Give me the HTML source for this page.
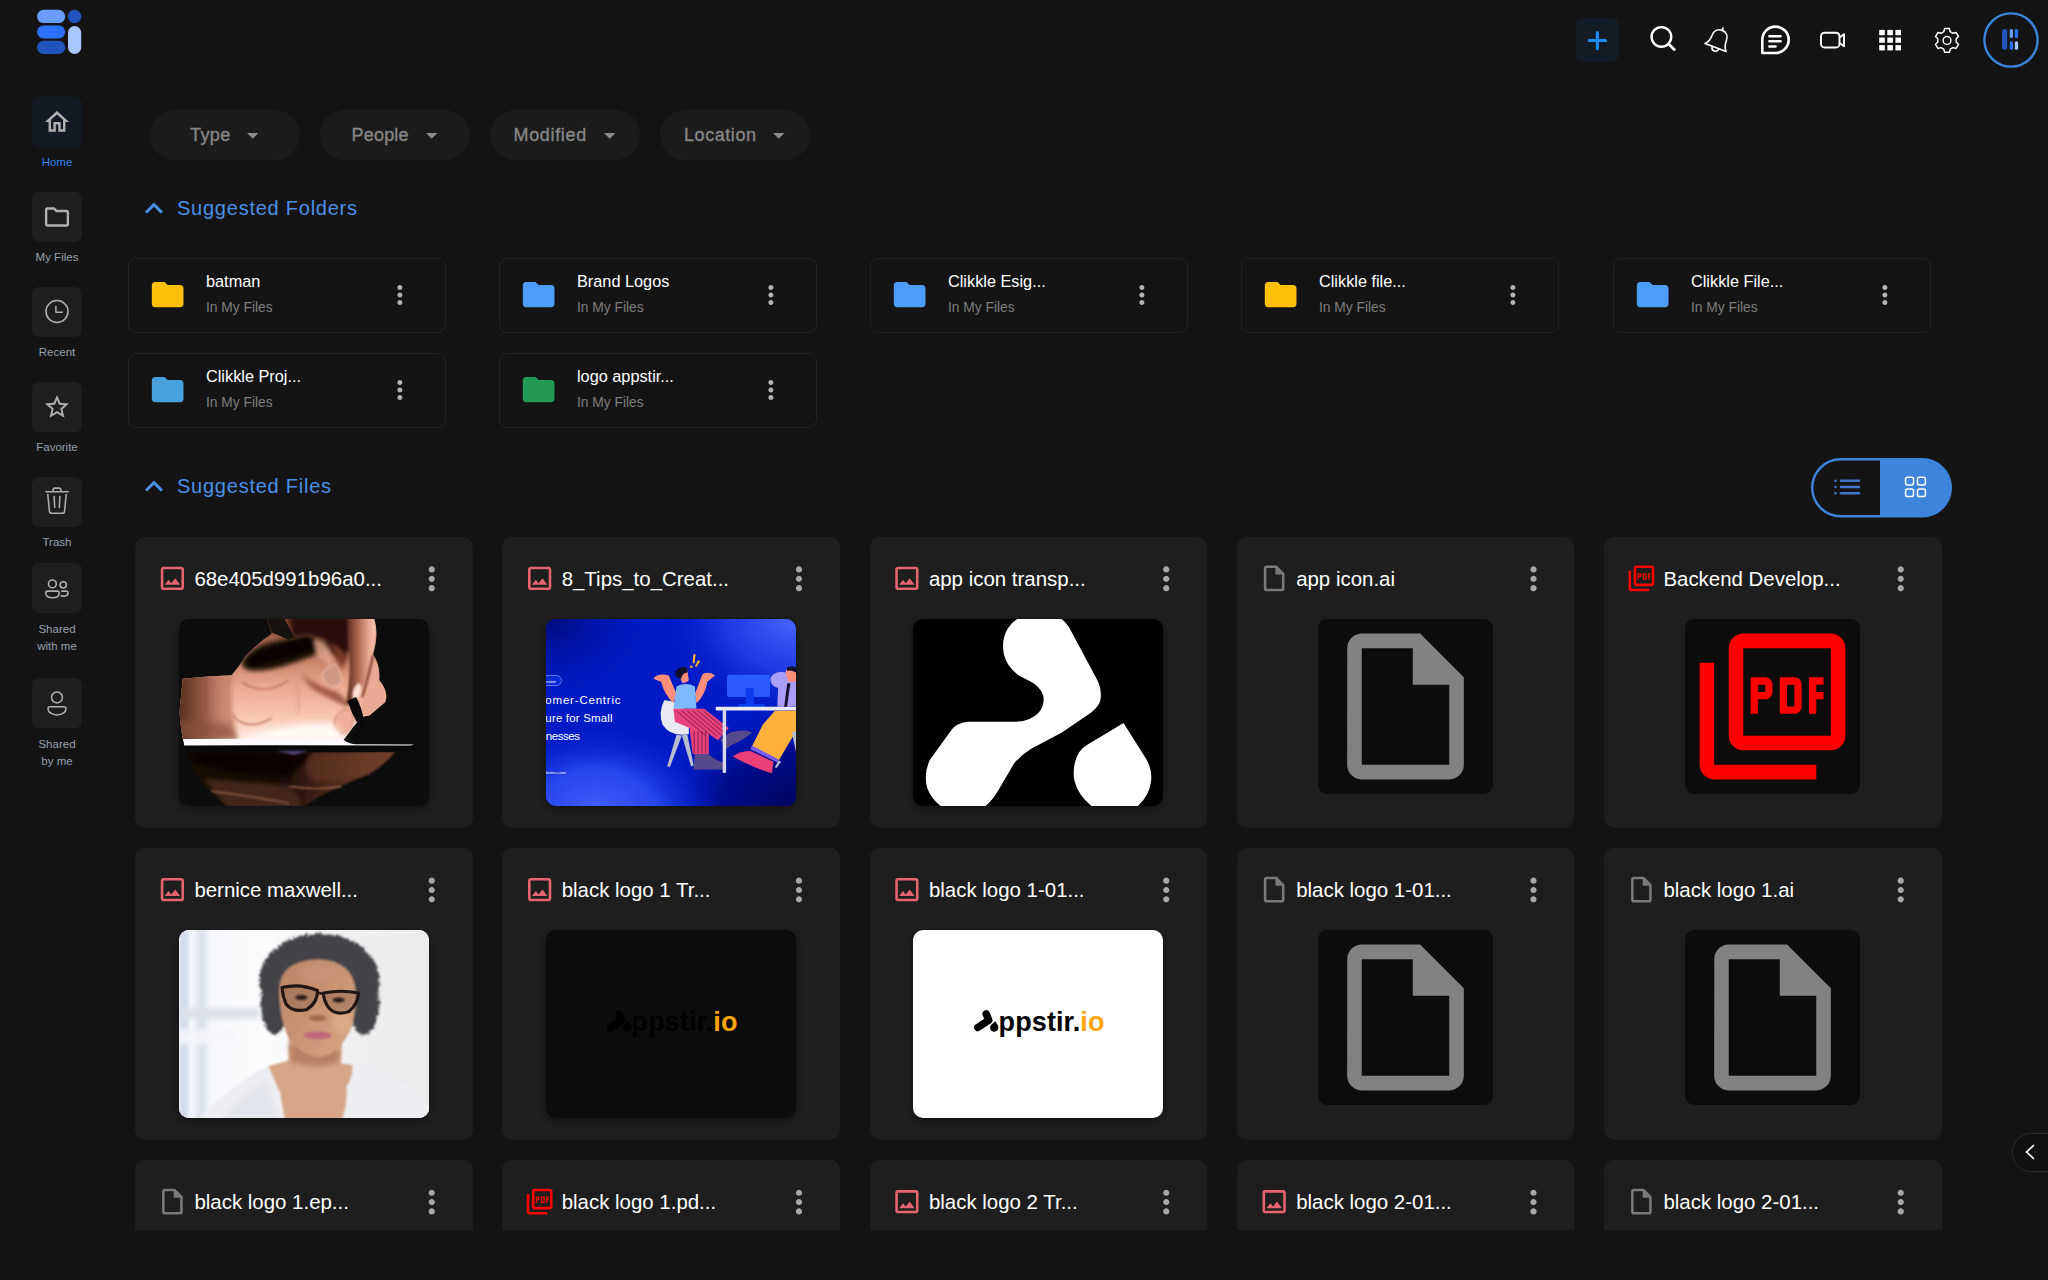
<!DOCTYPE html><html lang="en"><head><meta charset="utf-8"><title>Clikkle Files</title><style>
*{box-sizing:border-box;margin:0;padding:0}
html,body{width:2048px;height:1280px;overflow:hidden;background:#141414}
body{position:relative;font-family:"Liberation Sans",sans-serif;color:#fff}
.abs{position:absolute}
svg{display:block;position:absolute;overflow:visible}
.sb{position:absolute;left:32px;width:50px;height:50px;border-radius:7px;background:#1e1e1e}
.sl{position:absolute;left:0;width:114px;text-align:center;font-size:11.5px;line-height:17px;color:#94a0ae;white-space:nowrap}
.chip{position:absolute;top:110px;width:150px;height:50px;border-radius:25px;background:#1b1b1b;color:#868686;font-size:18px;line-height:50px;white-space:nowrap;-webkit-text-stroke:0.35px #868686}
.chip span{position:absolute;top:0px}
.sec{position:absolute;left:177px;font-size:20px;letter-spacing:0.76px;color:#4a90e8;white-space:nowrap;line-height:24px}
.fc{position:absolute;width:318px;height:74.5px;border:1px solid #222;border-radius:8px}
.fc .t{position:absolute;left:77px;top:12px;font-size:16.3px;line-height:20px;color:#fff;white-space:nowrap}
.fc .s{position:absolute;left:77px;top:41px;font-size:13.8px;line-height:16px;color:#7d7d7d;white-space:nowrap}
.card{position:absolute;width:337.500px;height:291.300px;border-radius:10px;background:#1e1e1e;overflow:hidden}
.card .t{position:absolute;left:59.400px;top:29.800px;font-size:20.450px;line-height:24px;color:#fff;white-space:nowrap}
.th{position:absolute;left:43.800px;top:82.200px;width:250px;height:187px;border-radius:10px;overflow:hidden;box-shadow:0 2px 4px -1px rgba(0,0,0,.2),0 4px 5px rgba(0,0,0,.14),0 1px 10px rgba(0,0,0,.12)}
.fb{position:absolute;left:81.300px;top:82.200px;width:175px;height:175px;border-radius:9px;background:#0c0c0c;overflow:hidden}
#clip{position:absolute;left:0;top:0;width:2048px;height:1230px;overflow:hidden}
</style></head><body>
<div id="clip">
<svg style="left:0;top:0" width="120" height="70" viewBox="0 0 120 70"><rect x="37" y="9.7" width="28.2" height="13.4" rx="6.7" fill="#6b9dff"/><rect x="37" y="25.4" width="28.2" height="13" rx="6.5" fill="#2a72fb"/><rect x="37" y="40.8" width="28.2" height="13.2" rx="6.6" fill="#2053bb"/><circle cx="74.6" cy="16.4" r="6.7" fill="#2053bb"/><rect x="68" y="26" width="13.2" height="28" rx="6.6" fill="#a9c6ff"/></svg>
<div class="sb" style="top:97px;background:#141a24;"></div>
<div class="sl" style="top:153.5px;color:#3384ee;">Home</div>
<div class="sb" style="top:192px;"></div>
<div class="sl" style="top:248.5px;">My Files</div>
<div class="sb" style="top:287px;"></div>
<div class="sl" style="top:343.5px;">Recent</div>
<div class="sb" style="top:382px;"></div>
<div class="sl" style="top:438.5px;">Favorite</div>
<div class="sb" style="top:477px;"></div>
<div class="sl" style="top:533.5px;">Trash</div>
<div class="sb" style="top:563px;"></div>
<div class="sl" style="top:620.5px;">Shared<br>with me</div>
<div class="sb" style="top:678px;"></div>
<div class="sl" style="top:735.5px;">Shared<br>by me</div>
<svg style="left:42.000px;top:107.000px" width="31" height="31" viewBox="0 0 31 31" ><path fill="#b0b0b0" transform="translate(0.500 0.500) scale(1.2083)" d="M12 5.69l5 4.5V18h-2v-6H9v6H7v-7.81l5-4.5M12 3L2 12h3v8h6v-6h2v6h6v-8h3L12 3z"/></svg>
<svg style="left:42.000px;top:202.000px" width="31" height="31" viewBox="0 0 31 31" ><path fill="#b0b0b0" transform="translate(0.500 0.500) scale(1.2083)" d="M9.17 6l2 2H20v10H4V6h5.17M10 4H4c-1.1 0-1.99.9-1.99 2L2 18c0 1.1.9 2 2 2h16c1.1 0 2-.9 2-2V8c0-1.1-.9-2-2-2h-8l-2-2z"/></svg>
<svg style="left:32px;top:287px" width="50" height="50" viewBox="0 0 50 50" fill="none" stroke="#b0b0b0" stroke-width="1.55" stroke-linecap="round" stroke-linejoin="round"><circle cx="25" cy="24.500" r="11"/><path d="M23.900 19.600v5.600h6.300"/></svg>
<svg style="left:42.000px;top:392.000px" width="31" height="31" viewBox="0 0 31 31" ><path fill="#b0b0b0" transform="translate(0.600 0.500) scale(1.2000)" d="M22 9.24l-7.19-.62L12 2 9.190 8.630 2 9.240l5.460 4.730L5.820 21 12 17.270 18.180 21l-1.630-7.030L22 9.240zM12 15.400l-3.760 2.270 1-4.280-3.320-2.880 4.380-.380L12 6.100l1.710 4.040 4.380.380-3.320 2.880 1 4.280L12 15.400z"/></svg>
<svg style="left:32px;top:477px" width="50" height="50" viewBox="0 0 50 50" fill="none" stroke="#b0b0b0" stroke-width="1.55" stroke-linecap="round" stroke-linejoin="round"><path d="M13.900 14.650H36.100M21.100 14.400v-1.600a1.700 1.700 0 0 1 1.700-1.700h4.400a1.700 1.700 0 0 1 1.700 1.700v1.600M15.800 17.500l1.700 17.200a1.700 1.700 0 0 0 1.700 1.500h11.600a1.700 1.700 0 0 0 1.700-1.500l1.700-17.200M22.100 19.600l.6 10.900M27.900 19.600l-.6 10.900"/></svg>
<svg style="left:32px;top:563px" width="50" height="50" viewBox="0 0 50 50" fill="none" stroke="#b0b0b0" stroke-width="1.55" stroke-linecap="round" stroke-linejoin="round"><circle cx="20.400" cy="20.900" r="3.900"/><circle cx="31.250" cy="21.800" r="3.100"/><path d="M15.600 28.100h9.800a1.800 1.800 0 0 1 1.800 1.800c0 3-2.800 4.800-6.700 4.800s-6.700-1.800-6.700-4.800a1.800 1.800 0 0 1 1.800-1.800z"/><path d="M29.800 28.100h4.400a1.800 1.800 0 0 1 1.800 1.800c0 2.200-1.900 3.200-4.500 3.200c-.9 0-1.700-.1-2.400-.4"/></svg>
<svg style="left:32px;top:678px" width="50" height="50" viewBox="0 0 50 50" fill="none" stroke="#b0b0b0" stroke-width="1.55" stroke-linecap="round" stroke-linejoin="round"><circle cx="25" cy="19.450" r="5.450"/><path d="M17.800 28.700h14.400a1.800 1.800 0 0 1 1.800 1.800c0 4-4 6.400-9 6.400s-9-2.400-9-6.400a1.800 1.800 0 0 1 1.800-1.800z"/></svg>
<div class="abs" style="left:1576px;top:18px;width:43px;height:44px;border-radius:7px;background:#131c26"></div>
<svg style="left:1576px;top:18px" width="43" height="44" viewBox="0 0 43 44" stroke="#1a8cff" stroke-width="3" stroke-linecap="round"><path d="M13.200 22.500h16.400M21.400 14.400v16.400"/></svg>
<svg style="left:1640px;top:16px" width="50" height="50" viewBox="0 0 50 50" fill="none" stroke="#fff" stroke-linecap="round" stroke-linejoin="round" stroke-width="2.400"><circle cx="21.400" cy="20.900" r="9.800"/><path d="M28.600 28l5.700 5.500" stroke-width="2.700"/></svg>
<svg style="left:1697px;top:16px" width="50" height="50" viewBox="0 0 50 50" fill="none" stroke="#fff" stroke-linecap="round" stroke-linejoin="round" stroke-width="1.650"><g transform="rotate(21 21.500 24)"><path d="M21.500 11.300v2.400M21.500 13.700c-4.800 0-7.600 3.600-7.600 8.200 0 4.400-1.200 7.600-3.600 10.200h22.400c-2.400-2.600-3.600-5.800-3.600-10.200 0-4.600-2.800-8.200-7.600-8.200z"/><path d="M18.100 32.300c0 2.100 1.500 3.500 3.400 3.500s3.400-1.400 3.400-3.500"/></g></svg>
<svg style="left:1750px;top:16px" width="50" height="50" viewBox="0 0 50 50" fill="none" stroke="#fff" stroke-linecap="round" stroke-linejoin="round" stroke-width="2.600"><path d="M12.300 37v-13.400a13.200 13.200 0 1 1 13.200 13.400z"/><path d="M19.400 20.300h11.200M19.400 25.200h11.200M19.400 30.400h6.200" stroke-width="2.500" stroke-linecap="round"/></svg>
<svg style="left:1807px;top:16px" width="50" height="50" viewBox="0 0 50 50" fill="none" stroke="#fff" stroke-linecap="round" stroke-linejoin="round" stroke-width="1.900"><rect x="14" y="16.700" width="18.500" height="14.800" rx="3.600"/><path d="M32.500 21.500l4.500-3.300v12l-4.500-3.300"/></svg>
<svg style="left:0;top:0" width="2048" height="80" viewBox="0 0 2048 80"><rect x="1879.2" y="29.9" width="5.600" height="5.300" fill="#fff"/><rect x="1887.3" y="29.9" width="5.600" height="5.300" fill="#fff"/><rect x="1895.4" y="29.9" width="5.600" height="5.300" fill="#fff"/><rect x="1879.2" y="37.5" width="5.600" height="5.300" fill="#fff"/><rect x="1887.3" y="37.5" width="5.600" height="5.300" fill="#fff"/><rect x="1895.4" y="37.5" width="5.600" height="5.300" fill="#fff"/><rect x="1879.2" y="45.1" width="5.600" height="5.300" fill="#fff"/><rect x="1887.3" y="45.1" width="5.600" height="5.300" fill="#fff"/><rect x="1895.4" y="45.1" width="5.600" height="5.300" fill="#fff"/></svg>
<svg style="left:0;top:0" width="2048" height="80" viewBox="0 0 2048 80" fill="none" stroke="#fff" stroke-width="1.450" stroke-linejoin="round"><path d="M1943.81 31.71 L1944.60 28.59 L1949.40 28.59 L1950.19 31.71 L1952.97 33.32 L1956.07 32.44 L1958.47 36.60 L1956.16 38.84 L1956.16 42.06 L1958.47 44.30 L1956.07 48.46 L1952.97 47.58 L1950.19 49.19 L1949.40 52.31 L1944.60 52.31 L1943.81 49.19 L1941.03 47.58 L1937.93 48.46 L1935.53 44.30 L1937.84 42.06 L1937.84 38.84 L1935.53 36.60 L1937.93 32.44 L1941.03 33.32Z"/><circle cx="1947" cy="40.450" r="3.900" stroke-width="1.450"/></svg>
<svg style="left:0;top:0" width="2048" height="80" viewBox="0 0 2048 80"><circle cx="2011" cy="40" r="26.600" fill="none" stroke="#3a86dc" stroke-width="2.400"/><rect x="2002" y="29" width="5.200" height="20.800" rx="2.400" fill="#2053bb"/><rect x="2009.700" y="29" width="3.300" height="9" rx="1.600" fill="#6b9dff"/><rect x="2014.800" y="29" width="3.300" height="9" rx="1.600" fill="#2a72fb"/><rect x="2009.700" y="41.200" width="3.300" height="8.600" rx="1.600" fill="#2a72fb"/><rect x="2014.800" y="41.200" width="3.300" height="8.600" rx="1.600" fill="#a9c6ff"/></svg>
<div class="chip" style="left:150px"><span style="left:40px;letter-spacing:0.38px">Type</span></div>
<svg style="left:247px;top:133.200px" width="11.400" height="5.800" viewBox="0 0 10 5"><path d="M0 0h10L5 5z" fill="#8c8c8c"/></svg>
<div class="chip" style="left:320px"><span style="left:31.5px;letter-spacing:0.2px">People</span></div>
<svg style="left:425.7px;top:133.200px" width="11.400" height="5.800" viewBox="0 0 10 5"><path d="M0 0h10L5 5z" fill="#8c8c8c"/></svg>
<div class="chip" style="left:490px"><span style="left:23.5px;letter-spacing:0.66px">Modified</span></div>
<svg style="left:603.6px;top:133.200px" width="11.400" height="5.800" viewBox="0 0 10 5"><path d="M0 0h10L5 5z" fill="#8c8c8c"/></svg>
<div class="chip" style="left:660px"><span style="left:24px;letter-spacing:0.56px">Location</span></div>
<svg style="left:772.6px;top:133.200px" width="11.400" height="5.800" viewBox="0 0 10 5"><path d="M0 0h10L5 5z" fill="#8c8c8c"/></svg>
<svg style="left:136.000px;top:190.000px" width="38" height="38" viewBox="0 0 38 38" ><path fill="#4a90e8" transform="translate(0.000 0.500) scale(1.5000)" d="M12 8l-6 6 1.41 1.41L12 10.83l4.59 4.59L18 14z"/></svg>
<div class="sec" style="top:196px">Suggested Folders</div>
<svg style="left:136.000px;top:468.000px" width="38" height="38" viewBox="0 0 38 38" ><path fill="#4a90e8" transform="translate(0.000 0.500) scale(1.5000)" d="M12 8l-6 6 1.41 1.41L12 10.83l4.59 4.59L18 14z"/></svg>
<div class="sec" style="top:474px">Suggested Files</div>
<div class="fc" style="left:128px;top:258px"><div class="t">batman</div><div class="s">In My Files</div></div>
<svg style="left:148.000px;top:275.000px" width="40" height="40" viewBox="0 0 40 40" ><path fill="#ffc107" transform="translate(0.650 0.550) scale(1.5833)" d="M10 4H4c-1.1 0-1.99.9-1.99 2L2 18c0 1.1.9 2 2 2h16c1.1 0 2-.9 2-2V8c0-1.1-.9-2-2-2h-8l-2-2z"/></svg>
<svg style="left:384.000px;top:279.000px" width="32" height="32" viewBox="0 0 32 32" ><path fill="#b5b5b5" transform="translate(0.900 0.900) scale(1.2500)" d="M12 8c1.1 0 2-.9 2-2s-.9-2-2-2-2 .9-2 2 .9 2 2 2zm0 2c-1.1 0-2 .9-2 2s.9 2 2 2 2-.9 2-2-.9-2-2-2zm0 6c-1.1 0-2 .9-2 2s.9 2 2 2 2-.9 2-2-.9-2-2-2z"/></svg>
<div class="fc" style="left:499px;top:258px"><div class="t">Brand Logos</div><div class="s">In My Files</div></div>
<svg style="left:519.000px;top:275.000px" width="40" height="40" viewBox="0 0 40 40" ><path fill="#4d9cf8" transform="translate(0.650 0.550) scale(1.5833)" d="M10 4H4c-1.1 0-1.99.9-1.99 2L2 18c0 1.1.9 2 2 2h16c1.1 0 2-.9 2-2V8c0-1.1-.9-2-2-2h-8l-2-2z"/></svg>
<svg style="left:755.000px;top:279.000px" width="32" height="32" viewBox="0 0 32 32" ><path fill="#b5b5b5" transform="translate(0.900 0.900) scale(1.2500)" d="M12 8c1.1 0 2-.9 2-2s-.9-2-2-2-2 .9-2 2 .9 2 2 2zm0 2c-1.1 0-2 .9-2 2s.9 2 2 2 2-.9 2-2-.9-2-2-2zm0 6c-1.1 0-2 .9-2 2s.9 2 2 2 2-.9 2-2-.9-2-2-2z"/></svg>
<div class="fc" style="left:870px;top:258px"><div class="t">Clikkle Esig...</div><div class="s">In My Files</div></div>
<svg style="left:890.000px;top:275.000px" width="40" height="40" viewBox="0 0 40 40" ><path fill="#4d9cf8" transform="translate(0.650 0.550) scale(1.5833)" d="M10 4H4c-1.1 0-1.99.9-1.99 2L2 18c0 1.1.9 2 2 2h16c1.1 0 2-.9 2-2V8c0-1.1-.9-2-2-2h-8l-2-2z"/></svg>
<svg style="left:1126.000px;top:279.000px" width="32" height="32" viewBox="0 0 32 32" ><path fill="#b5b5b5" transform="translate(0.900 0.900) scale(1.2500)" d="M12 8c1.1 0 2-.9 2-2s-.9-2-2-2-2 .9-2 2 .9 2 2 2zm0 2c-1.1 0-2 .9-2 2s.9 2 2 2 2-.9 2-2-.9-2-2-2zm0 6c-1.1 0-2 .9-2 2s.9 2 2 2 2-.9 2-2-.9-2-2-2z"/></svg>
<div class="fc" style="left:1241px;top:258px"><div class="t">Clikkle file...</div><div class="s">In My Files</div></div>
<svg style="left:1261.000px;top:275.000px" width="40" height="40" viewBox="0 0 40 40" ><path fill="#ffc107" transform="translate(0.650 0.550) scale(1.5833)" d="M10 4H4c-1.1 0-1.99.9-1.99 2L2 18c0 1.1.9 2 2 2h16c1.1 0 2-.9 2-2V8c0-1.1-.9-2-2-2h-8l-2-2z"/></svg>
<svg style="left:1497.000px;top:279.000px" width="32" height="32" viewBox="0 0 32 32" ><path fill="#b5b5b5" transform="translate(0.900 0.900) scale(1.2500)" d="M12 8c1.1 0 2-.9 2-2s-.9-2-2-2-2 .9-2 2 .9 2 2 2zm0 2c-1.1 0-2 .9-2 2s.9 2 2 2 2-.9 2-2-.9-2-2-2zm0 6c-1.1 0-2 .9-2 2s.9 2 2 2 2-.9 2-2-.9-2-2-2z"/></svg>
<div class="fc" style="left:1613px;top:258px"><div class="t">Clikkle File...</div><div class="s">In My Files</div></div>
<svg style="left:1633.000px;top:275.000px" width="40" height="40" viewBox="0 0 40 40" ><path fill="#4d9cf8" transform="translate(0.650 0.550) scale(1.5833)" d="M10 4H4c-1.1 0-1.99.9-1.99 2L2 18c0 1.1.9 2 2 2h16c1.1 0 2-.9 2-2V8c0-1.1-.9-2-2-2h-8l-2-2z"/></svg>
<svg style="left:1869.000px;top:279.000px" width="32" height="32" viewBox="0 0 32 32" ><path fill="#b5b5b5" transform="translate(0.900 0.900) scale(1.2500)" d="M12 8c1.1 0 2-.9 2-2s-.9-2-2-2-2 .9-2 2 .9 2 2 2zm0 2c-1.1 0-2 .9-2 2s.9 2 2 2 2-.9 2-2-.9-2-2-2zm0 6c-1.1 0-2 .9-2 2s.9 2 2 2 2-.9 2-2-.9-2-2-2z"/></svg>
<div class="fc" style="left:128px;top:353px"><div class="t">Clikkle Proj...</div><div class="s">In My Files</div></div>
<svg style="left:148.000px;top:370.000px" width="40" height="40" viewBox="0 0 40 40" ><path fill="#48a0dc" transform="translate(0.650 0.550) scale(1.5833)" d="M10 4H4c-1.1 0-1.99.9-1.99 2L2 18c0 1.1.9 2 2 2h16c1.1 0 2-.9 2-2V8c0-1.1-.9-2-2-2h-8l-2-2z"/></svg>
<svg style="left:384.000px;top:374.000px" width="32" height="32" viewBox="0 0 32 32" ><path fill="#b5b5b5" transform="translate(0.900 0.900) scale(1.2500)" d="M12 8c1.1 0 2-.9 2-2s-.9-2-2-2-2 .9-2 2 .9 2 2 2zm0 2c-1.1 0-2 .9-2 2s.9 2 2 2 2-.9 2-2-.9-2-2-2zm0 6c-1.1 0-2 .9-2 2s.9 2 2 2 2-.9 2-2-.9-2-2-2z"/></svg>
<div class="fc" style="left:499px;top:353px"><div class="t">logo appstir...</div><div class="s">In My Files</div></div>
<svg style="left:519.000px;top:370.000px" width="40" height="40" viewBox="0 0 40 40" ><path fill="#229954" transform="translate(0.650 0.550) scale(1.5833)" d="M10 4H4c-1.1 0-1.99.9-1.99 2L2 18c0 1.1.9 2 2 2h16c1.1 0 2-.9 2-2V8c0-1.1-.9-2-2-2h-8l-2-2z"/></svg>
<svg style="left:755.000px;top:374.000px" width="32" height="32" viewBox="0 0 32 32" ><path fill="#b5b5b5" transform="translate(0.900 0.900) scale(1.2500)" d="M12 8c1.1 0 2-.9 2-2s-.9-2-2-2-2 .9-2 2 .9 2 2 2zm0 2c-1.1 0-2 .9-2 2s.9 2 2 2 2-.9 2-2-.9-2-2-2zm0 6c-1.1 0-2 .9-2 2s.9 2 2 2 2-.9 2-2-.9-2-2-2z"/></svg>
<svg style="left:0;top:0" width="2048" height="600" viewBox="0 0 2048 600"><path d="M1880 459.200H1922.300a28.500 28.500 0 0 1 0 57H1880z" fill="#3d85dc"/><rect x="1812.200" y="459.200" width="138.600" height="57" rx="28.500" fill="none" stroke="#3d85dc" stroke-width="2.400"/></svg>
<svg style="left:0;top:0" width="2048" height="600" viewBox="0 0 2048 600"><circle cx="1835.500" cy="480.8" r="1.300" fill="#3f74c8"/><path d="M1841 480.8H1859" stroke="#3f74c8" stroke-width="2.500" stroke-linecap="round"/><circle cx="1835.500" cy="487" r="1.300" fill="#3f74c8"/><path d="M1841 487H1859" stroke="#3f74c8" stroke-width="2.500" stroke-linecap="round"/><circle cx="1835.500" cy="493.3" r="1.300" fill="#3f74c8"/><path d="M1841 493.3H1859" stroke="#3f74c8" stroke-width="2.500" stroke-linecap="round"/><rect x="1905.6" y="477.2" width="7.900" height="7.700" rx="1.800" fill="none" stroke="#fff" stroke-width="1.500"/><rect x="1905.6" y="488.9" width="7.900" height="7.700" rx="1.800" fill="none" stroke="#fff" stroke-width="1.500"/><rect x="1917.5" y="477.2" width="7.900" height="7.700" rx="1.800" fill="none" stroke="#fff" stroke-width="1.500"/><rect x="1917.5" y="488.9" width="7.900" height="7.700" rx="1.800" fill="none" stroke="#fff" stroke-width="1.500"/></svg>
<div class="card" style="left:135px;top:536.8px;height:291.3px"><div class="t">68e405d991b96a0...</div><svg style="left:21.000px;top:25.200px" width="33" height="33" viewBox="0 0 33 33" ><path fill="#e76372" transform="translate(0.900 0.900) scale(1.2917)" d="M19 5v14H5V5h14m0-2H5c-1.1 0-2 .9-2 2v14c0 1.1.9 2 2 2h14c1.1 0 2-.9 2-2V5c0-1.1-.9-2-2-2zm-4.86 8.86l-3 3.87L9 13.14 6 17h12l-3.86-5.14z"/></svg><svg style="left:278.000px;top:23.200px" width="40" height="40" viewBox="0 0 40 40" ><path fill="#a8a8a8" transform="translate(0.050 0.100) scale(1.5583)" d="M12 8c1.1 0 2-.9 2-2s-.9-2-2-2-2 .9-2 2 .9 2 2 2zm0 2c-1.1 0-2 .9-2 2s.9 2 2 2 2-.9 2-2-.9-2-2-2zm0 6c-1.1 0-2 .9-2 2s.9 2 2 2 2-.9 2-2-.9-2-2-2z"/></svg><div class="th" style="height:187px"><svg style="left:0;top:0;background:#0c0c0c" width="250" height="188" viewBox="0 0 250 188"><defs><linearGradient id="hg1" gradientUnits="userSpaceOnUse" x1="0" y1="0" x2="0" y2="122"><stop offset="0" stop-color="#7a3f2c"/><stop offset=".35" stop-color="#c98569"/><stop offset=".55" stop-color="#eaa88f"/><stop offset=".8" stop-color="#f8c6b2"/><stop offset="1" stop-color="#ffe9df"/></linearGradient><linearGradient id="hg2" gradientUnits="userSpaceOnUse" x1="0" y1="0" x2="220" y2="0"><stop offset="0" stop-color="#140705"/><stop offset=".45" stop-color="#160906"/><stop offset=".62" stop-color="#3e2015"/><stop offset=".85" stop-color="#6a3a28"/><stop offset="1" stop-color="#7a4632"/></linearGradient><linearGradient id="hg4" gradientUnits="userSpaceOnUse" x1="166" y1="0" x2="198" y2="0"><stop offset="0" stop-color="#4a2014"/><stop offset=".45" stop-color="#b36e55"/><stop offset=".8" stop-color="#efb39c"/><stop offset="1" stop-color="#f7c4b0"/></linearGradient><linearGradient id="hg5" gradientUnits="userSpaceOnUse" x1="0" y1="50" x2="55" y2="50"><stop offset="0" stop-color="#5a2f20"/><stop offset=".5" stop-color="#9a5e48"/><stop offset="1" stop-color="#d99a82" stop-opacity="0"/></linearGradient><filter id="hb1" x="-30%" y="-30%" width="160%" height="160%"><feGaussianBlur stdDeviation="2.2"/></filter><filter id="hb2" x="-20%" y="-20%" width="140%" height="140%"><feGaussianBlur stdDeviation="0.9"/></filter><filter id="hb3" x="-30%" y="-30%" width="160%" height="160%"><feGaussianBlur stdDeviation="3.6"/></filter><clipPath id="hc"><path d="M 0.0 0.0 L 250.0 0.0 L 250.0 189.2 L 49.4 189.2 Q 15.9 162.4 6.1 130.6 Q 0.0 106.2 0.0 75.7 Z"/></clipPath><clipPath id="hu"><path d="M 0.0 97.7 L 3.7 59.8 Q 29.3 56.8 52.5 56.2 Q 61.0 46.4 65.9 37.8 Q 78.1 24.4 92.8 14.6 L 87.9 0.0 L 195.3 0.0 Q 200.2 14.6 194.1 35.4 Q 201.4 45.2 200.2 61.0 Q 210.0 73.2 206.3 83.0 L 190.4 96.4 L 183.1 97.7 L 174.6 107.4 L 164.8 120.8 L 0.0 120.8 Z"/></clipPath></defs><g clip-path="url(#hc)"><path d="M 4.9 132.8 L 216.1 132.8 Q 207.5 144.0 190.4 155.0 Q 175.8 160.5 162.4 167.2 Q 144.0 174.6 131.8 183.1 L 122.1 189.2 L 46.4 189.2 Q 14.6 162.4 4.9 132.8 Z" fill="url(#hg2)" filter="url(#hb2)"/><path d="M 7.3 133.1 L 134.3 133.1 Q 122.1 145.3 109.9 157.5 Q 61.0 157.5 14.6 142.8 Z" fill="#080202" opacity=".95" filter="url(#hb1)"/><path d="M 131.8 134.3 L 212.4 133.7 Q 200.2 147.7 183.1 155.0 Q 158.7 162.4 134.3 162.4 Q 122.1 147.7 131.8 134.3 Z" fill="#6a3a28" opacity=".55" filter="url(#hb1)"/><path d="M 24.4 159.9 Q 73.2 162.4 109.9 167.2 Q 122.1 177.0 122.1 189.2 L 48.8 189.2 Z" fill="#4a2a1c" opacity=".9" filter="url(#hb1)"/><path d="M 31.7 172.1 Q 73.2 177.0 109.9 184.3" stroke="#8a5a44" stroke-width="1.6" fill="none" filter="url(#hb2)"/><path d="M 109.9 167.2 Q 140.4 172.1 162.4 167.2" stroke="#a06a50" stroke-width="1.4" fill="none" filter="url(#hb2)"/><g clip-path="url(#hu)"><rect x="0" y="0" width="250" height="125" fill="url(#hg1)"/><path d="M 0.0 58.6 L 53.7 55.5 Q 48.8 78.1 58.6 122.1 L 0.0 122.1 Z" fill="#c07a60" opacity=".8" filter="url(#hb1)"/><rect x="0" y="55" width="55" height="70" fill="url(#hg5)"/><path d="M 0.0 101.3 L 51.3 105.0 L 57.4 120.2 L 0.0 120.2 Z" fill="#8a523c" opacity=".7" filter="url(#hb3)"/><path d="M 109.9 -2.4 L 170.9 -2.4 L 173.3 26.9 L 163.6 41.5 L 151.4 33.0 L 145.3 20.8 L 129.4 15.9 L 113.5 18.3 Z" fill="#2a100a" filter="url(#hb1)"/><path d="M 150.1 24.4 Q 162.4 26.9 168.5 39.1 L 162.4 51.3 Q 157.5 36.6 150.1 24.4 Z" fill="#7a3a28" filter="url(#hb1)"/><path d="M 63.5 41.5 Q 73.2 26.9 95.2 22.6 L 128.2 15.9 Q 142.8 18.3 148.9 29.3 Q 136.7 36.6 109.9 45.2 Q 87.9 52.5 70.8 51.3 Q 61.0 48.8 63.5 41.5 Z" fill="#170805" filter="url(#hb1)"/><path d="M 68.4 40.3 Q 85.4 28.1 127.0 19.5 Q 136.7 22.0 134.3 29.3 Q 109.9 39.1 73.2 46.4 Z" fill="#0c0302" filter="url(#hb2)"/><path d="M 134.3 19.5 Q 146.5 20.8 151.4 34.2 Q 156.2 43.9 151.4 48.8 Q 144.0 40.3 136.7 35.4 Z" fill="#e0a48c" opacity=".85" filter="url(#hb1)"/><path d="M 168.5 -2.4 L 196.5 -2.4 Q 200.2 14.6 194.1 35.4 L 183.1 69.6 L 175.8 87.9 L 167.2 84.2 Q 173.3 48.8 168.5 24.4 Z" fill="url(#hg4)" filter="url(#hb2)"/><path d="M 142.8 54.9 Q 148.9 46.4 156.2 45.2 Q 162.4 52.5 162.4 63.5 Q 157.5 68.4 151.4 67.7 Q 145.3 63.5 142.8 54.9 Z" fill="#cf9884" stroke="#f3cfc2" stroke-width=".8" filter="url(#hb2)"/><path d="M 122.1 54.9 Q 140.4 68.4 158.7 73.2 L 170.9 84.2 L 168.5 87.9 Q 146.5 78.1 131.8 68.4 Z" fill="#8a3a28" opacity=".75" filter="url(#hb1)"/><path d="M 192.9 35.4 Q 201.4 45.2 200.2 61.0 Q 210.0 73.2 206.3 83.0 L 190.4 96.4 L 180.7 96.4 Q 185.5 68.4 192.9 35.4 Z" fill="#eaa992" filter="url(#hb2)"/><path d="M 194.1 36.6 Q 190.4 54.9 183.1 78.1" stroke="#7a3a28" stroke-width="2.2" fill="none" filter="url(#hb2)"/><ellipse cx="178" cy="73" rx="4" ry="9" fill="#ffe1d4" filter="url(#hb2)" transform="rotate(15 178 73)"/><path d="M 63.5 63.5 Q 85.4 78.1 109.9 61.0" stroke="#c47a62" stroke-width="1.6" fill="none" filter="url(#hb2)"/><path d="M 114.7 54.9 Q 122.1 73.2 119.6 94.0" stroke="#e09a84" stroke-width="2" fill="none" filter="url(#hb1)"/><path d="M 53.7 96.4 Q 68.4 113.5 92.8 98.9" stroke="#c98670" stroke-width="1.8" fill="none" filter="url(#hb2)"/><path d="M 155.0 101.3 Q 157.5 94.0 164.8 90.3 L 175.8 91.6 L 173.3 106.2 Q 168.5 116.0 161.1 114.8 Q 153.8 109.9 155.0 101.3 Z" fill="#efb09a" stroke="#b86a55" stroke-width=".8" filter="url(#hb2)"/><path d="M 57.4 121.5 Q 97.7 103.8 152.6 105.0 Q 162.4 112.3 164.8 121.5 Z" fill="#fffaf6" filter="url(#hb3)"/></g><path d="M 87.9 -1.2 L 105.0 -1.2 L 115.4 18.3 L 109.9 20.8 L 92.8 13.4 Z" fill="#17110f"/><path d="M 168.5 81.8 L 177.0 78.1 Q 183.1 89.1 184.9 101.3 L 185.8 114.5 L 179.4 106.2 Q 172.1 94.0 168.5 81.8 Z" fill="#0b0909"/><path d="M 3.7 120.2 L 163.6 119.9 Q 167.2 124.5 175.8 125.5 L 235.6 125.5 Q 241.1 127.6 235.6 130.6 L 214.8 133.1 L 4.9 133.3 Z" fill="#0a0808"/><path d="M 3.7 120.0 L 163.6 119.6 Q 167.2 124.3 175.8 125.2 L 235.0 125.5 L 231.9 126.5 L 109.9 126.2 L 4.9 126.5 Z" fill="#fbf8ff"/><path d="M 97.7 132.1 L 129.4 131.8 L 114.7 136.1 Z" fill="#6a60a8" opacity=".7" filter="url(#hb2)"/></g></svg></div></div>
<div class="card" style="left:502.25px;top:536.8px;height:291.3px"><div class="t">8_Tips_to_Creat...</div><svg style="left:21.750px;top:25.200px" width="33" height="33" viewBox="0 0 33 33" ><path fill="#e76372" transform="translate(0.150 0.900) scale(1.2917)" d="M19 5v14H5V5h14m0-2H5c-1.1 0-2 .9-2 2v14c0 1.1.9 2 2 2h14c1.1 0 2-.9 2-2V5c0-1.1-.9-2-2-2zm-4.86 8.86l-3 3.87L9 13.14 6 17h12l-3.86-5.14z"/></svg><svg style="left:277.750px;top:23.200px" width="40" height="40" viewBox="0 0 40 40" ><path fill="#a8a8a8" transform="translate(0.300 0.100) scale(1.5583)" d="M12 8c1.1 0 2-.9 2-2s-.9-2-2-2-2 .9-2 2 .9 2 2 2zm0 2c-1.1 0-2 .9-2 2s.9 2 2 2 2-.9 2-2-.9-2-2-2zm0 6c-1.1 0-2 .9-2 2s.9 2 2 2 2-.9 2-2-.9-2-2-2z"/></svg><div class="th" style="height:187px"><svg style="left:0;top:0;background:#001bc6" width="250" height="188" viewBox="0 0 250 188"><defs><radialGradient id="tg1" cx="1" cy="0" r=".55"><stop offset="0" stop-color="#4a68ff"/><stop offset=".5" stop-color="#2a48f0" stop-opacity=".7"/><stop offset="1" stop-color="#001cc8" stop-opacity="0"/></radialGradient><radialGradient id="tg2" cx="0" cy="0" r=".5"><stop offset="0" stop-color="#000a78"/><stop offset="1" stop-color="#001cc8" stop-opacity="0"/></radialGradient><radialGradient id="tg3" cx=".2" cy="1.050" r=".5"><stop offset="0" stop-color="#4561ff"/><stop offset=".5" stop-color="#3050f5" stop-opacity=".8"/><stop offset="1" stop-color="#001cc8" stop-opacity="0"/></radialGradient><radialGradient id="tg4" cx="1" cy="1" r=".6"><stop offset="0" stop-color="#00045c"/><stop offset=".5" stop-color="#000a80" stop-opacity=".85"/><stop offset="1" stop-color="#001cc8" stop-opacity="0"/></radialGradient></defs><rect width="250" height="188" fill="#001bc6"/><rect width="250" height="188" fill="url(#tg2)"/><rect width="250" height="188" fill="url(#tg4)"/><rect width="250" height="188" fill="url(#tg1)"/><rect width="250" height="188" fill="url(#tg3)"/><text x="-27.500" y="85" font-size="11.500" letter-spacing=".8" font-family="Liberation Sans, sans-serif" fill="#fff">Customer-Centric</text><text x="-21.800" y="102.800" font-size="11.500" letter-spacing=".17" font-family="Liberation Sans, sans-serif" fill="#fff">Culture for Small</text><text x="-20.800" y="120.500" font-size="11.500" letter-spacing="-.45" font-family="Liberation Sans, sans-serif" fill="#fff">Businesses</text><text x="-14" y="155.200" font-size="4.300" font-family="Liberation Sans, sans-serif" fill="#fff">cognitoforms.com</text><rect x="-10" y="56.500" width="25.500" height="10" rx="5" fill="#0a2ad8" stroke="#9fb2ff" stroke-width=".6"/><text x="-6" y="63.500" font-size="3.800" font-family="Liberation Sans, sans-serif" fill="#fff">Overview</text><path d="M 118.2 81.2 Q 112.0 93.5 116.6 105.8 Q 124.3 118.2 142.8 115.1 L 142.8 93.5 Q 130.5 81.2 118.2 81.2 Z" fill="#e9e9f1" /><path d="M 130.5 115.8 L 121.2 147.4 L 124.0 147.7 L 135.9 116.6 Z" fill="#b9bdd0" /><path d="M 135.9 116.6 L 145.1 147.4 L 147.7 146.6 L 141.2 115.1 Z" fill="#b9bdd0" /><path d="M 107.4 59.7 Q 112.0 53.5 122.8 56.6 L 130.5 75.0 L 127.4 84.3 Q 118.2 75.0 115.1 62.7 Z" fill="#ff8f7a" /><path d="M 169.0 56.6 Q 164.3 52.0 156.6 55.0 L 148.9 75.0 L 150.5 84.3 Q 159.7 75.0 161.3 62.7 Z" fill="#ff8f7a" /><path d="M 130.5 67.4 Q 139.7 62.7 148.9 67.4 L 150.5 89.7 L 127.4 89.7 Z" fill="#7fb8ff" /><path d="M 133.5 56.6 Q 133.5 48.1 141.2 50.4 L 142.8 61.2 Q 139.7 65.0 135.9 63.5 Z" fill="#ff8f7a" /><path d="M 128.9 55.0 Q 130.5 47.3 139.7 48.1 Q 142.8 50.4 141.2 53.5 Q 136.6 53.5 135.1 59.7 Q 130.5 59.7 128.9 55.0 Z" fill="#12102a" /><path d="M 147.4 35.3 L 149.7 35.3 L 148.5 44.3 L 146.6 44.3 Z" fill="#ffb52e" /><path d="M 152.0 41.2 L 154.3 42.0 L 150.5 48.1 L 148.9 47.3 Z" fill="#ffb52e" /><path d="M 144.0 46.6 L 146.6 47.0 L 146.3 48.9 L 143.9 48.4 Z" fill="#ffb52e" /><path d="M 127.4 89.7 L 158.2 89.7 L 182.8 108.9 L 172.0 121.2 L 162.8 115.1 L 162.8 135.1 L 146.6 135.1 L 143.6 108.9 L 128.9 102.8 Z" fill="#e9417c" /><path d="M 130.5 92.0 L 159.7 116.6" stroke="#5a1233" stroke-width=".7" fill="none"/><path d="M 135.9 92.0 L 165.1 116.6" stroke="#5a1233" stroke-width=".7" fill="none"/><path d="M 141.2 92.0 L 170.5 116.6" stroke="#5a1233" stroke-width=".7" fill="none"/><path d="M 146.6 92.0 L 175.9 116.6" stroke="#5a1233" stroke-width=".7" fill="none"/><path d="M 152.0 92.0 L 181.3 116.6" stroke="#5a1233" stroke-width=".7" fill="none"/><path d="M 157.4 92.0 L 186.7 116.6" stroke="#5a1233" stroke-width=".7" fill="none"/><path d="M 148.2 112.0 L 148.2 134.3" stroke="#5a1233" stroke-width=".7" fill="none"/><path d="M 152.0 112.0 L 152.0 134.3" stroke="#5a1233" stroke-width=".7" fill="none"/><path d="M 155.9 112.0 L 155.9 134.3" stroke="#5a1233" stroke-width=".7" fill="none"/><path d="M 159.7 112.0 L 159.7 134.3" stroke="#5a1233" stroke-width=".7" fill="none"/><path d="M 174.3 120.5 L 184.3 113.5 Q 198.2 109.7 206.2 113.5 Q 195.1 122.8 185.9 125.8 L 179.7 130.5 Z" fill="#564a8c" /><path d="M 148.9 135.1 L 162.0 135.1 Q 169.0 141.2 177.4 143.6 L 177.4 150.5 L 147.4 150.5 Z" fill="#564a8c" /><rect x="181.0" y="55.8" width="43.1" height="22.3" rx="2" fill="#2b5bff" /><rect x="199.7" y="68.9" width="8.0" height="17.7" rx="0" fill="#0d3df0" /><rect x="192.0" y="85.1" width="26.9" height="2.8" rx="1" fill="#0d3df0" /><rect x="169.7" y="87.8" width="80.8" height="3.8" rx="1" fill="#eceaf4" /><rect x="176.7" y="91.2" width="3.4" height="62.7" rx="0" fill="#d9d9e6" /><path d="M 224.4 59.7 Q 225.9 53.5 235.1 52.7 L 250.1 55.0 L 250.1 87.8 L 231.3 87.8 L 232.1 68.9 Q 224.4 67.4 224.4 59.7 Z" fill="#a99df7" /><path d="M 239.8 52.0 Q 241.3 47.3 250.1 48.1 L 250.1 62.7 L 242.8 62.7 Q 239.8 58.1 239.8 52.0 Z" fill="#ff8f7a" /><path d="M 240.5 48.9 Q 244.4 46.6 250.1 48.1 L 250.1 53.5 Q 244.4 50.4 241.3 52.0 Z" fill="#12102a" /><path d="M 241.3 64.3 L 244.4 64.3 L 241.0 87.8 L 238.2 87.8 Z" fill="#12102a" /><path d="M 229.0 91.7 L 250.1 91.7 L 250.1 112.0 L 232.8 141.2 L 205.9 127.4 L 216.7 105.8 Z" fill="#ffb13b" /><path d="M 205.9 126.6 L 232.8 140.5 L 231.3 143.6 L 204.4 130.2 Z" fill="#7a5cf0" /><path d="M 186.7 137.4 Q 195.1 132.0 204.4 132.0 L 227.5 142.8 L 225.9 154.3 Q 207.4 148.9 186.7 137.4 Z" fill="#ea3f77" /><path d="M 245.9 113.5 L 250.1 112.0 L 250.1 133.5 Z" fill="#b9bdd0" /><path d="M 235.1 142.8 L 230.5 148.9 L 228.7 148.2 L 232.8 141.2 Z" fill="#b9bdd0" /></svg></div></div>
<div class="card" style="left:869.5px;top:536.8px;height:291.3px"><div class="t">app icon transp...</div><svg style="left:21.500px;top:25.200px" width="33" height="33" viewBox="0 0 33 33" ><path fill="#e76372" transform="translate(0.400 0.900) scale(1.2917)" d="M19 5v14H5V5h14m0-2H5c-1.1 0-2 .9-2 2v14c0 1.1.9 2 2 2h14c1.1 0 2-.9 2-2V5c0-1.1-.9-2-2-2zm-4.86 8.86l-3 3.87L9 13.14 6 17h12l-3.86-5.14z"/></svg><svg style="left:277.500px;top:23.200px" width="40" height="40" viewBox="0 0 40 40" ><path fill="#a8a8a8" transform="translate(0.550 0.100) scale(1.5583)" d="M12 8c1.1 0 2-.9 2-2s-.9-2-2-2-2 .9-2 2 .9 2 2 2zm0 2c-1.1 0-2 .9-2 2s.9 2 2 2 2-.9 2-2-.9-2-2-2zm0 6c-1.1 0-2 .9-2 2s.9 2 2 2 2-.9 2-2-.9-2-2-2z"/></svg><div class="th" style="height:187px"><svg style="left:0;top:0;background:#000" width="250" height="188" viewBox="0 0 250 188"><path d="M 104.3 -0.1 L 148.2 -0.1 Q 152.8 2.7 155.9 8.1 L 183.6 59.7 Q 189.3 70.4 187.4 81.2 Q 185.9 87.4 178.2 93.5 L 148.9 113.5 L 118.2 129.7 Q 107.4 136.6 101.2 144.3 L 85.8 170.5 Q 79.7 181.3 72.0 187.4 L 28.1 187.4 Q 18.1 179.7 14.2 169.0 Q 10.4 155.1 16.6 141.2 L 36.6 113.5 Q 42.7 103.5 55.0 102.8 L 102.8 102.8 Q 118.2 102.0 125.8 93.5 Q 132.0 85.8 130.2 76.6 Q 127.4 67.4 116.6 62.0 L 105.8 56.6 Q 93.5 47.3 90.8 35.0 Q 88.1 19.6 95.1 8.9 Q 99.7 2.7 104.3 -0.1 Z" fill="#fff"/><path d="M 210.5 104.0 L 232.1 138.2 Q 239.0 148.9 238.2 161.3 Q 236.7 176.7 224.4 187.4 L 179.0 187.4 Q 165.1 176.7 161.3 161.3 Q 158.9 145.9 165.9 133.5 Q 169.0 128.9 174.3 125.8 Z" fill="#fff"/></svg></div></div>
<div class="card" style="left:1236.75px;top:536.8px;height:291.3px"><div class="t">app icon.ai</div><svg style="left:21.250px;top:25.200px" width="33" height="33" viewBox="0 0 33 33" ><path fill="#7a7a7a" transform="translate(0.650 0.900) scale(1.2917)" d="M14 2H6c-1.1 0-1.99.9-1.99 2L4 20c0 1.1.89 2 1.99 2H18c1.1 0 2-.9 2-2V8l-6-6zM6 20V4h7v5h5v11H6z"/></svg><svg style="left:277.250px;top:23.200px" width="40" height="40" viewBox="0 0 40 40" ><path fill="#a8a8a8" transform="translate(0.800 0.100) scale(1.5583)" d="M12 8c1.1 0 2-.9 2-2s-.9-2-2-2-2 .9-2 2 .9 2 2 2zm0 2c-1.1 0-2 .9-2 2s.9 2 2 2 2-.9 2-2-.9-2-2-2zm0 6c-1.1 0-2 .9-2 2s.9 2 2 2 2-.9 2-2-.9-2-2-2z"/></svg><div class="fb"><svg style="left:0.000px;top:0.000px" width="177" height="177" viewBox="0 0 177 177" ><path fill="#828282" transform="translate(0.000 0.000) scale(7.2917)" d="M14 2H6c-1.1 0-1.99.9-1.99 2L4 20c0 1.1.89 2 1.99 2H18c1.1 0 2-.9 2-2V8l-6-6zM6 20V4h7v5h5v11H6z"/></svg></div></div>
<div class="card" style="left:1604px;top:536.8px;height:291.3px"><div class="t">Backend Develop...</div><svg style="left:21.000px;top:25.200px" width="33" height="33" viewBox="0 0 33 33" ><path fill="#f00" transform="translate(0.900 0.900) scale(1.2917)" d="M20 2H8c-1.1 0-2 .9-2 2v12c0 1.1.9 2 2 2h12c1.1 0 2-.9 2-2V4c0-1.1-.9-2-2-2zm0 14H8V4h12v12zM4 6H2v14c0 1.1.9 2 2 2h14v-2H4V6zm12 6V9c0-.55-.45-1-1-1h-2v5h2c.55 0 1-.45 1-1zm-2-3h1v3h-1V9zm4 2h1v-1h-1V9h1V8h-2v5h1v-2zm-8 0h1c.55 0 1-.45 1-1V9c0-.55-.45-1-1-1H9v5h1v-2zm0-2h1v1h-1V9z"/></svg><svg style="left:278.000px;top:23.200px" width="40" height="40" viewBox="0 0 40 40" ><path fill="#a8a8a8" transform="translate(0.050 0.100) scale(1.5583)" d="M12 8c1.1 0 2-.9 2-2s-.9-2-2-2-2 .9-2 2 .9 2 2 2zm0 2c-1.1 0-2 .9-2 2s.9 2 2 2 2-.9 2-2-.9-2-2-2zm0 6c-1.1 0-2 .9-2 2s.9 2 2 2 2-.9 2-2-.9-2-2-2z"/></svg><div class="fb"><svg style="left:0.000px;top:0.000px" width="177" height="177" viewBox="0 0 177 177" ><path fill="#f00" transform="translate(0.000 0.000) scale(7.2917)" d="M20 2H8c-1.1 0-2 .9-2 2v12c0 1.1.9 2 2 2h12c1.1 0 2-.9 2-2V4c0-1.1-.9-2-2-2zm0 14H8V4h12v12zM4 6H2v14c0 1.1.9 2 2 2h14v-2H4V6zm12 6V9c0-.55-.45-1-1-1h-2v5h2c.55 0 1-.45 1-1zm-2-3h1v3h-1V9zm4 2h1v-1h-1V9h1V8h-2v5h1v-2zm-8 0h1c.55 0 1-.45 1-1V9c0-.55-.45-1-1-1H9v5h1v-2zm0-2h1v1h-1V9z"/></svg></div></div>
<div class="card" style="left:135px;top:848px;height:292.1px"><div class="t">bernice maxwell...</div><svg style="left:21.000px;top:26.000px" width="33" height="33" viewBox="0 0 33 33" ><path fill="#e76372" transform="translate(0.900 0.100) scale(1.2917)" d="M19 5v14H5V5h14m0-2H5c-1.1 0-2 .9-2 2v14c0 1.1.9 2 2 2h14c1.1 0 2-.9 2-2V5c0-1.1-.9-2-2-2zm-4.86 8.86l-3 3.87L9 13.14 6 17h12l-3.86-5.14z"/></svg><svg style="left:278.000px;top:23.000px" width="40" height="40" viewBox="0 0 40 40" ><path fill="#a8a8a8" transform="translate(0.050 0.300) scale(1.5583)" d="M12 8c1.1 0 2-.9 2-2s-.9-2-2-2-2 .9-2 2 .9 2 2 2zm0 2c-1.1 0-2 .9-2 2s.9 2 2 2 2-.9 2-2-.9-2-2-2zm0 6c-1.1 0-2 .9-2 2s.9 2 2 2 2-.9 2-2-.9-2-2-2z"/></svg><div class="th" style="height:188px"><svg style="left:0;top:0;background:#f0f0f2" width="250" height="188" viewBox="0 0 250 188"><defs><filter id="wb1" x="-20%" y="-20%" width="140%" height="140%"><feGaussianBlur stdDeviation="2.5"/></filter><filter id="wb2" x="-20%" y="-20%" width="140%" height="140%"><feGaussianBlur stdDeviation="1.2"/></filter><filter id="wb3" x="-20%" y="-20%" width="140%" height="140%"><feGaussianBlur stdDeviation="4"/></filter><filter id="wfz" x="-20%" y="-20%" width="140%" height="140%"><feTurbulence type="fractalNoise" baseFrequency="0.35" numOctaves="2" seed="3" result="n"/><feDisplacementMap in="SourceGraphic" in2="n" scale="7" xChannelSelector="R" yChannelSelector="G"/><feGaussianBlur stdDeviation="1.1"/></filter><linearGradient id="wg0" x1="0" y1="0" x2="1" y2="0"><stop offset="0" stop-color="#f2f5f9"/><stop offset=".35" stop-color="#fbfcfd"/><stop offset=".7" stop-color="#efeff1"/><stop offset="1" stop-color="#ebebed"/></linearGradient><linearGradient id="wg1" x1="0" y1="0" x2="1" y2="1"><stop offset="0" stop-color="#b98466"/><stop offset=".5" stop-color="#c99373"/><stop offset="1" stop-color="#d8a685"/></linearGradient></defs><rect width="250" height="188" fill="url(#wg0)"/><rect x="1" y="-5" width="8" height="200" fill="#cdd8e6" filter="url(#wb1)"/><rect x="17" y="-5" width="11" height="200" fill="#dde3ec" filter="url(#wb1)"/><rect x="-5" y="78" width="85" height="11" fill="#dde2ea" filter="url(#wb1)"/><rect x="-5" y="100" width="60" height="14" fill="#f4f6f9" filter="url(#wb3)"/><path d="M 18.1 190.5 Q 45.8 161.3 67.4 148.9 Q 81.2 138.2 90.4 135.1 L 176.7 133.5 Q 195.1 138.2 213.6 147.4 Q 238.2 159.7 253.6 179.7 L 253.6 190.5 Z" fill="#eceef2" filter="url(#wb2)"/><path d="M 41.2 190.5 Q 59.7 167.4 87.4 148.9 L 99.7 190.5 Z" fill="#dfe2e8" opacity=".7" filter="url(#wb1)"/><path d="M 109.7 102.8 L 162.8 112.0 L 162.0 133.5 L 173.6 135.1 Q 173.6 148.9 167.4 156.6 Q 169.0 172.0 162.8 190.5 L 105.8 190.5 Q 102.8 172.0 101.2 162.8 Q 93.5 145.9 89.7 135.9 L 109.7 130.5 Z" fill="#d7a587" filter="url(#wb2)"/><path d="M 109.7 113.5 L 161.3 119.7 L 158.2 133.5 Q 133.5 139.7 112.0 132.0 Z" fill="#b0785c" opacity=".8" filter="url(#wb1)"/><g filter="url(#wfz)" fill="#434346"><ellipse cx="140.500" cy="50.500" rx="60" ry="47"/><ellipse cx="185" cy="74" rx="15" ry="31"/><ellipse cx="96" cy="74" rx="14" ry="30"/></g><path d="M 100,60 Q 100,31 138,29 Q 175,30 177,62 Q 178,90 167,108 Q 155,126 140,127 Q 122,126 110,108 Q 100,90 100,60 Z" fill="url(#wg1)" filter="url(#wb2)"/><ellipse cx="163" cy="92" rx="9" ry="12" fill="#e0b090" opacity=".7" filter="url(#wb1)"/><ellipse cx="140" cy="42" rx="22" ry="8" fill="#c9957a" opacity=".6" filter="url(#wb1)"/><path d="M 103,57.500 Q 121,53 138.500,60.500 Q 139,72 128,79.500 Q 114,83 107,74 Q 103.500,66 103,57.500 Z" fill="#6b4a3c" fill-opacity=".28" stroke="#221615" stroke-width="3.2" stroke-linejoin="round"/><path d="M 144.500,63 Q 162,59.500 179.500,63 Q 179,74 170,81.500 Q 157,86 150,78 Q 144.500,71 144.500,63 Z" fill="#6b4a3c" fill-opacity=".28" stroke="#221615" stroke-width="3.2" stroke-linejoin="round"/><path d="M 138.500 62.500 L 144.500 64" stroke="#221615" stroke-width="2.400"/><ellipse cx="122.400" cy="67.500" rx="6" ry="2.600" fill="#2a1a15" filter="url(#wb2)"/><ellipse cx="159.600" cy="70" rx="6" ry="2.600" fill="#2a1a15" filter="url(#wb2)"/><ellipse cx="138.500" cy="88" rx="9" ry="3" fill="#96603f" opacity=".75" filter="url(#wb2)"/><ellipse cx="138.500" cy="105.500" rx="14" ry="3.800" fill="#bf667a" filter="url(#wb2)"/></svg></div></div>
<div class="card" style="left:502.25px;top:848px;height:292.1px"><div class="t">black logo 1 Tr...</div><svg style="left:21.750px;top:26.000px" width="33" height="33" viewBox="0 0 33 33" ><path fill="#e76372" transform="translate(0.150 0.100) scale(1.2917)" d="M19 5v14H5V5h14m0-2H5c-1.1 0-2 .9-2 2v14c0 1.1.9 2 2 2h14c1.1 0 2-.9 2-2V5c0-1.1-.9-2-2-2zm-4.86 8.86l-3 3.87L9 13.14 6 17h12l-3.86-5.14z"/></svg><svg style="left:277.750px;top:23.000px" width="40" height="40" viewBox="0 0 40 40" ><path fill="#a8a8a8" transform="translate(0.300 0.300) scale(1.5583)" d="M12 8c1.1 0 2-.9 2-2s-.9-2-2-2-2 .9-2 2 .9 2 2 2zm0 2c-1.1 0-2 .9-2 2s.9 2 2 2 2-.9 2-2-.9-2-2-2zm0 6c-1.1 0-2 .9-2 2s.9 2 2 2 2-.9 2-2-.9-2-2-2z"/></svg><div class="th" style="height:188px"><svg style="left:0;top:0;background:#0c0c0c" width="250" height="188" viewBox="0 0 250 188"><g transform="translate(60.5 79.7)" fill="#000" stroke="#000"><path d="M12.600 4.100 L15.300 10.500 L4.300 17.800" fill="none" stroke-width="7.400" stroke-linecap="round" stroke-linejoin="round"/><path d="M21.800 11.600 L24.300 15.600 Q25.600 18.200 24.200 20.200 Q22.600 22.200 20.200 22 Q17.600 21.600 16.700 19.200 Q16 16.800 17.800 15 Z" stroke="none"/></g><text x="85.600" y="101.300" font-family="Liberation Sans, sans-serif" font-weight="700" font-size="27" letter-spacing="0.1" fill="#000">ppstir.<tspan fill="#ffa50a">io</tspan></text></svg></div></div>
<div class="card" style="left:869.5px;top:848px;height:292.1px"><div class="t">black logo 1-01...</div><svg style="left:21.500px;top:26.000px" width="33" height="33" viewBox="0 0 33 33" ><path fill="#e76372" transform="translate(0.400 0.100) scale(1.2917)" d="M19 5v14H5V5h14m0-2H5c-1.1 0-2 .9-2 2v14c0 1.1.9 2 2 2h14c1.1 0 2-.9 2-2V5c0-1.1-.9-2-2-2zm-4.86 8.86l-3 3.87L9 13.14 6 17h12l-3.86-5.14z"/></svg><svg style="left:277.500px;top:23.000px" width="40" height="40" viewBox="0 0 40 40" ><path fill="#a8a8a8" transform="translate(0.550 0.300) scale(1.5583)" d="M12 8c1.1 0 2-.9 2-2s-.9-2-2-2-2 .9-2 2 .9 2 2 2zm0 2c-1.1 0-2 .9-2 2s.9 2 2 2 2-.9 2-2-.9-2-2-2zm0 6c-1.1 0-2 .9-2 2s.9 2 2 2 2-.9 2-2-.9-2-2-2z"/></svg><div class="th" style="height:188px"><svg style="left:0;top:0;background:#fff" width="250" height="188" viewBox="0 0 250 188"><g transform="translate(60.5 79.7)" fill="#000" stroke="#000"><path d="M12.600 4.100 L15.300 10.500 L4.300 17.800" fill="none" stroke-width="7.400" stroke-linecap="round" stroke-linejoin="round"/><path d="M21.800 11.600 L24.300 15.600 Q25.600 18.200 24.200 20.200 Q22.600 22.200 20.200 22 Q17.600 21.600 16.700 19.200 Q16 16.800 17.800 15 Z" stroke="none"/></g><text x="85.600" y="101.300" font-family="Liberation Sans, sans-serif" font-weight="700" font-size="27" letter-spacing="0.1" fill="#000">ppstir.<tspan fill="#ffa50a">io</tspan></text></svg></div></div>
<div class="card" style="left:1236.75px;top:848px;height:292.1px"><div class="t">black logo 1-01...</div><svg style="left:21.250px;top:26.000px" width="33" height="33" viewBox="0 0 33 33" ><path fill="#7a7a7a" transform="translate(0.650 0.100) scale(1.2917)" d="M14 2H6c-1.1 0-1.99.9-1.99 2L4 20c0 1.1.89 2 1.99 2H18c1.1 0 2-.9 2-2V8l-6-6zM6 20V4h7v5h5v11H6z"/></svg><svg style="left:277.250px;top:23.000px" width="40" height="40" viewBox="0 0 40 40" ><path fill="#a8a8a8" transform="translate(0.800 0.300) scale(1.5583)" d="M12 8c1.1 0 2-.9 2-2s-.9-2-2-2-2 .9-2 2 .9 2 2 2zm0 2c-1.1 0-2 .9-2 2s.9 2 2 2 2-.9 2-2-.9-2-2-2zm0 6c-1.1 0-2 .9-2 2s.9 2 2 2 2-.9 2-2-.9-2-2-2z"/></svg><div class="fb"><svg style="left:0.000px;top:0.000px" width="177" height="177" viewBox="0 0 177 177" ><path fill="#828282" transform="translate(0.000 0.000) scale(7.2917)" d="M14 2H6c-1.1 0-1.99.9-1.99 2L4 20c0 1.1.89 2 1.99 2H18c1.1 0 2-.9 2-2V8l-6-6zM6 20V4h7v5h5v11H6z"/></svg></div></div>
<div class="card" style="left:1604px;top:848px;height:292.1px"><div class="t">black logo 1.ai</div><svg style="left:21.000px;top:26.000px" width="33" height="33" viewBox="0 0 33 33" ><path fill="#7a7a7a" transform="translate(0.900 0.100) scale(1.2917)" d="M14 2H6c-1.1 0-1.99.9-1.99 2L4 20c0 1.1.89 2 1.99 2H18c1.1 0 2-.9 2-2V8l-6-6zM6 20V4h7v5h5v11H6z"/></svg><svg style="left:278.000px;top:23.000px" width="40" height="40" viewBox="0 0 40 40" ><path fill="#a8a8a8" transform="translate(0.050 0.300) scale(1.5583)" d="M12 8c1.1 0 2-.9 2-2s-.9-2-2-2-2 .9-2 2 .9 2 2 2zm0 2c-1.1 0-2 .9-2 2s.9 2 2 2 2-.9 2-2-.9-2-2-2zm0 6c-1.1 0-2 .9-2 2s.9 2 2 2 2-.9 2-2-.9-2-2-2z"/></svg><div class="fb"><svg style="left:0.000px;top:0.000px" width="177" height="177" viewBox="0 0 177 177" ><path fill="#828282" transform="translate(0.000 0.000) scale(7.2917)" d="M14 2H6c-1.1 0-1.99.9-1.99 2L4 20c0 1.1.89 2 1.99 2H18c1.1 0 2-.9 2-2V8l-6-6zM6 20V4h7v5h5v11H6z"/></svg></div></div>
<div class="card" style="left:135px;top:1160.1px;height:291.3px"><div class="t">black logo 1.ep...</div><svg style="left:21.000px;top:25.900px" width="33" height="33" viewBox="0 0 33 33" ><path fill="#7a7a7a" transform="translate(0.900 0.200) scale(1.2917)" d="M14 2H6c-1.1 0-1.99.9-1.99 2L4 20c0 1.1.89 2 1.99 2H18c1.1 0 2-.9 2-2V8l-6-6zM6 20V4h7v5h5v11H6z"/></svg><svg style="left:278.000px;top:22.900px" width="40" height="40" viewBox="0 0 40 40" ><path fill="#a8a8a8" transform="translate(0.050 0.400) scale(1.5583)" d="M12 8c1.1 0 2-.9 2-2s-.9-2-2-2-2 .9-2 2 .9 2 2 2zm0 2c-1.1 0-2 .9-2 2s.9 2 2 2 2-.9 2-2-.9-2-2-2zm0 6c-1.1 0-2 .9-2 2s.9 2 2 2 2-.9 2-2-.9-2-2-2z"/></svg></div>
<div class="card" style="left:502.25px;top:1160.1px;height:291.3px"><div class="t">black logo 1.pd...</div><svg style="left:21.750px;top:25.900px" width="33" height="33" viewBox="0 0 33 33" ><path fill="#f00" transform="translate(0.150 0.200) scale(1.2917)" d="M20 2H8c-1.1 0-2 .9-2 2v12c0 1.1.9 2 2 2h12c1.1 0 2-.9 2-2V4c0-1.1-.9-2-2-2zm0 14H8V4h12v12zM4 6H2v14c0 1.1.9 2 2 2h14v-2H4V6zm12 6V9c0-.55-.45-1-1-1h-2v5h2c.55 0 1-.45 1-1zm-2-3h1v3h-1V9zm4 2h1v-1h-1V9h1V8h-2v5h1v-2zm-8 0h1c.55 0 1-.45 1-1V9c0-.55-.45-1-1-1H9v5h1v-2zm0-2h1v1h-1V9z"/></svg><svg style="left:277.750px;top:22.900px" width="40" height="40" viewBox="0 0 40 40" ><path fill="#a8a8a8" transform="translate(0.300 0.400) scale(1.5583)" d="M12 8c1.1 0 2-.9 2-2s-.9-2-2-2-2 .9-2 2 .9 2 2 2zm0 2c-1.1 0-2 .9-2 2s.9 2 2 2 2-.9 2-2-.9-2-2-2zm0 6c-1.1 0-2 .9-2 2s.9 2 2 2 2-.9 2-2-.9-2-2-2z"/></svg></div>
<div class="card" style="left:869.5px;top:1160.1px;height:291.3px"><div class="t">black logo 2 Tr...</div><svg style="left:21.500px;top:25.900px" width="33" height="33" viewBox="0 0 33 33" ><path fill="#e76372" transform="translate(0.400 0.200) scale(1.2917)" d="M19 5v14H5V5h14m0-2H5c-1.1 0-2 .9-2 2v14c0 1.1.9 2 2 2h14c1.1 0 2-.9 2-2V5c0-1.1-.9-2-2-2zm-4.86 8.86l-3 3.87L9 13.14 6 17h12l-3.86-5.14z"/></svg><svg style="left:277.500px;top:22.900px" width="40" height="40" viewBox="0 0 40 40" ><path fill="#a8a8a8" transform="translate(0.550 0.400) scale(1.5583)" d="M12 8c1.1 0 2-.9 2-2s-.9-2-2-2-2 .9-2 2 .9 2 2 2zm0 2c-1.1 0-2 .9-2 2s.9 2 2 2 2-.9 2-2-.9-2-2-2zm0 6c-1.1 0-2 .9-2 2s.9 2 2 2 2-.9 2-2-.9-2-2-2z"/></svg></div>
<div class="card" style="left:1236.75px;top:1160.1px;height:291.3px"><div class="t">black logo 2-01...</div><svg style="left:21.250px;top:25.900px" width="33" height="33" viewBox="0 0 33 33" ><path fill="#e76372" transform="translate(0.650 0.200) scale(1.2917)" d="M19 5v14H5V5h14m0-2H5c-1.1 0-2 .9-2 2v14c0 1.1.9 2 2 2h14c1.1 0 2-.9 2-2V5c0-1.1-.9-2-2-2zm-4.86 8.86l-3 3.87L9 13.14 6 17h12l-3.86-5.14z"/></svg><svg style="left:277.250px;top:22.900px" width="40" height="40" viewBox="0 0 40 40" ><path fill="#a8a8a8" transform="translate(0.800 0.400) scale(1.5583)" d="M12 8c1.1 0 2-.9 2-2s-.9-2-2-2-2 .9-2 2 .9 2 2 2zm0 2c-1.1 0-2 .9-2 2s.9 2 2 2 2-.9 2-2-.9-2-2-2zm0 6c-1.1 0-2 .9-2 2s.9 2 2 2 2-.9 2-2-.9-2-2-2z"/></svg></div>
<div class="card" style="left:1604px;top:1160.1px;height:291.3px"><div class="t">black logo 2-01...</div><svg style="left:21.000px;top:25.900px" width="33" height="33" viewBox="0 0 33 33" ><path fill="#7a7a7a" transform="translate(0.900 0.200) scale(1.2917)" d="M14 2H6c-1.1 0-1.99.9-1.99 2L4 20c0 1.1.89 2 1.99 2H18c1.1 0 2-.9 2-2V8l-6-6zM6 20V4h7v5h5v11H6z"/></svg><svg style="left:278.000px;top:22.900px" width="40" height="40" viewBox="0 0 40 40" ><path fill="#a8a8a8" transform="translate(0.050 0.400) scale(1.5583)" d="M12 8c1.1 0 2-.9 2-2s-.9-2-2-2-2 .9-2 2 .9 2 2 2zm0 2c-1.1 0-2 .9-2 2s.9 2 2 2 2-.9 2-2-.9-2-2-2zm0 6c-1.1 0-2 .9-2 2s.9 2 2 2 2-.9 2-2-.9-2-2-2z"/></svg></div>
</div>
<div class="abs" style="left:2011.500px;top:1132.500px;width:60px;height:39px;border-radius:20px;border:1px solid #2c2c2c;background:#101010"></div>
<svg style="left:2020px;top:1140px" width="24" height="24" viewBox="0 0 24 24" fill="none" stroke="#fff" stroke-width="1.700"><path d="M14 5l-7.500 7 7.500 7"/></svg>
</body></html>
